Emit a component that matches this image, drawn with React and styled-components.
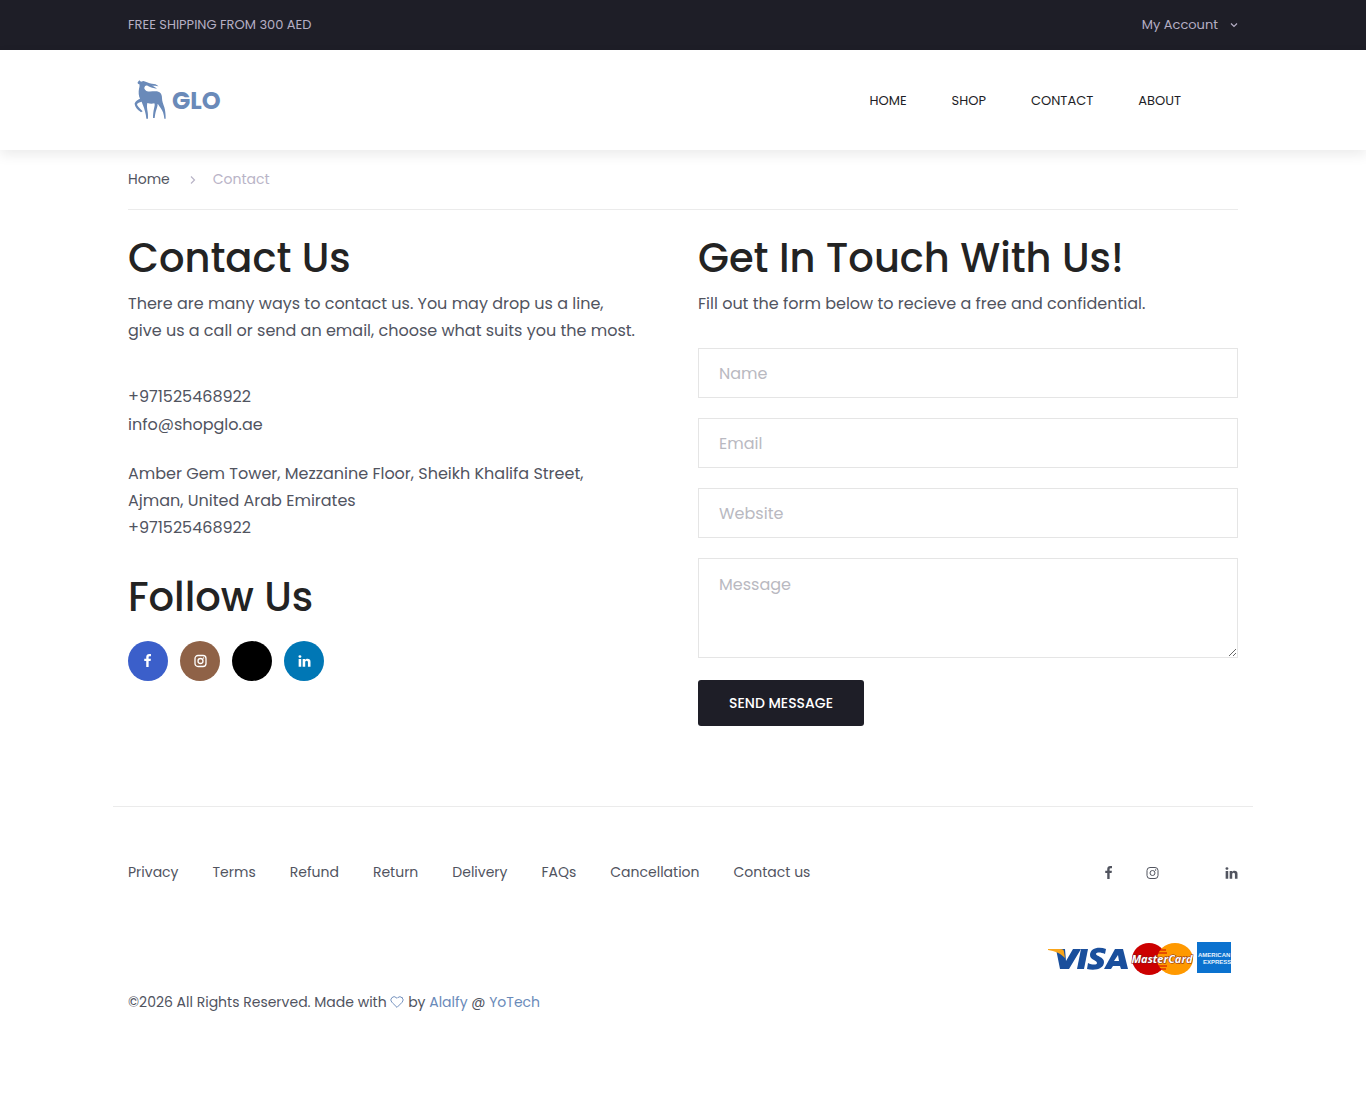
import styled, { createGlobalStyle, css } from 'styled-components'
import { FiHeart } from 'react-icons/fi'

const navLinks = ['HOME', 'SHOP', 'CONTACT', 'ABOUT']

const footerLinks = [
  'Privacy',
  'Terms',
  'Refund',
  'Return',
  'Delivery',
  'FAQs',
  'Cancellation',
  'Contact us',
]

const Facebook = () => (
  <svg width="8" height="14" viewBox="448 0 1024 1792" fill="currentColor">
    <path d="M1343 12v264h-157q-86 0-116 36t-30 108v189h293l-39 296h-254v759h-306v-759h-255v-296h255v-218q0-186 104-288.5t277-102.5q147 0 228 12z" />
  </svg>
)

const Instagram = () => (
  <svg width="13" height="14" viewBox="0 0 13 14" fill="none" stroke="currentColor">
    <rect x="1" y="1.500" width="11" height="11" rx="3" />
    <circle cx="6.5" cy="7" r="2.5" />
    <circle cx="9.6" cy="4" r="0.7" fill="currentColor" stroke="none" />
  </svg>
)

const Linkedin = () => (
  <svg width="13" height="14" viewBox="128 0 1536 1792" fill="currentColor">
    <path d="M477 625v991h-330v-991h330zm21-306q1 73-50.5 122t-135.5 49h-2q-82 0-132-49t-50-122q0-74 51.5-122.5t134.5-48.5 133 48.5 51 122.5zm1166 729v568h-329v-530q0-105-40.5-164.5t-126.5-59.5q-63 0-105.5 34.5t-63.5 85.5q-11 30-11 81v553h-329q2-399 2-647t-1-296l-1-48h329v144h-2q20-32 41-56t56.5-52 87-43.5 114.5-15.5q171 0 278 113.5t107 332.5z" />
  </svg>
)

const socials = [
  { name: 'Facebook', color: '#3b5fca', icon: <Facebook /> },
  { name: 'Instagram', color: '#8f6247', icon: <Instagram /> },
  { name: 'X', color: '#000', icon: null },
  { name: 'LinkedIn', color: '#0077b5', icon: <Linkedin /> },
]

const Chevron = ({ d }) => (
  <svg width="8" height="8" viewBox="0 0 8 8" fill="none" stroke="currentColor" strokeWidth="1.2">
    <path d={d} />
  </svg>
)

const Logo = () => (
  <svg width="40" height="48" viewBox="0 0 120 144" fill="#6a8ab9" aria-hidden="true">
    <path d="M23 19L28 13L33 17L40 15C50 17 56 23 66 23C74 23 80 25 86 31C78 29 72 29 66 29C72 31 76 33 81 38C70 37 62 34 54 30C50 28 47 28 45 31C41 36 43 41 49 45C57 48 66 46 76 46C90 46 96 54 96 66C96 77 100 84 103 94C106 104 107 116 107 128L103 128C102 114 98 104 92 96C88 90 85 86 83 83C83 92 79 100 77 108C75 114 75 120 74 126L69 126C69 116 70 106 72 98C74 90 75 86 73 82C66 84 58 83 52 81C50 88 51 98 53 108C54 114 54 120 54 128L49 128C48 114 43 98 39 88C37 82 36 80 35 77C28 79 23 81 21 84C21 89 28 96 38 106L33 109C24 102 14 94 14 82C17 75 24 71 30 68C26 59 25 48 27 38C29 32 29 28 28 25C26 25 24 24 23 22z" />
  </svg>
)

const Cards = () => (
  <svg width="186" height="36" viewBox="0 0 186 36" role="img" aria-label="Visa, MasterCard, American Express">
    <g fill="#1a4f9c">
      <path d="M9 8h9l1 12 7-12h8L22 28h-9z" />
      <path d="M34 8h7l-4 20h-7z" />
      <path d="M59 8l-1 5c-4-2-9-2-9 0 0 2 8 3 8 8 0 7-9 9-17 7l1-6c4 2 9 2 9 0 0-3-7-3-7-8 0-7 9-9 16-6z" />
      <path d="M68 8h8l5 20h-7l-1-3h-7l-2 3h-7zm3 6l-4 6h5z" fillRule="evenodd" />
    </g>
    <path d="M1 8h12c3 0 4 1 4 3l1 6C13 12 8 10 1 9z" fill="#f9a51a" />
    <ellipse cx="102" cy="18" rx="17" ry="16" fill="#cc0000" />
    <ellipse cx="128" cy="18" rx="18" ry="16" fill="#ff9900" />
    <path d="M112 9h7M111 12h9M110 25h10M112 28h7" stroke="#cc0000" strokeWidth="1" />
    <text
      x="115"
      y="22"
      textAnchor="middle"
      fontFamily="'Open Sans', sans-serif"
      fontSize="11"
      fontWeight="700"
      fontStyle="italic"
      fill="#fff"
      stroke="#7a1c1c"
      strokeWidth="1"
      paintOrder="stroke"
    >
      MasterCard
    </text>
    <rect x="150" y="1" width="34" height="31" fill="#0b72cf" />
    <g
      fontFamily="'Liberation Sans', sans-serif"
      fontSize="6"
      fontWeight="700"
      fill="#e6f2fd"
    >
      <text x="151" y="16">AMERICAN</text>
      <text x="156" y="23">EXPRESS</text>
    </g>
  </svg>
)

const App = () => {
  return (
    <>
      <GlobalStyle />
      <TopBar>
        <Container className="bar">
          <span>FREE SHIPPING FROM 300 AED</span>
          <AccountButton type="button">
            My Account <Chevron d="M1 2.5l3 3 3-3" />
          </AccountButton>
        </Container>
      </TopBar>

      <Header>
        <Container className="bar">
          <Brand href="#">
            <Logo />
            GLO
          </Brand>
          <Nav>
            {navLinks.map((link) => (
              <a href="#" key={link}>
                {link}
              </a>
            ))}
          </Nav>
        </Container>
      </Header>

      <Container>
        <Breadcrumb aria-label="Breadcrumb">
          <a href="#">Home</a>
          <Chevron d="M2 0.5l3.500 3.500-3.500 3.500" />
          <span>Contact</span>
        </Breadcrumb>

        <Columns>
          <section>
            <Title>Contact Us</Title>
            <Text>
              There are many ways to contact us. You may drop us a line,
              <br />
              give us a call or send an email, choose what suits you the most.
            </Text>
            <Details>
              <a href="tel:+971525468922">+971525468922</a>
              <a href="mailto:info@shopglo.ae">info@shopglo.ae</a>
            </Details>
            <Text>
              Amber Gem Tower, Mezzanine Floor, Sheikh Khalifa Street,
              <br />
              Ajman, United Arab Emirates
              <br />
              +971525468922
            </Text>
            <Title $spaced>Follow Us</Title>
            <SocialRow>
              {socials.map(({ name, color, icon }) => (
                <SocialCircle href="#" key={name} aria-label={name} $color={color}>
                  {icon}
                </SocialCircle>
              ))}
            </SocialRow>
          </section>

          <section>
            <Title>Get In Touch With Us!</Title>
            <Text>Fill out the form below to recieve a free and confidential.</Text>
            <Form onSubmit={(e) => e.preventDefault()}>
              <Input type="text" placeholder="Name" aria-label="Name" />
              <Input type="email" placeholder="Email" aria-label="Email" />
              <Input type="text" placeholder="Website" aria-label="Website" />
              <TextArea placeholder="Message" aria-label="Message" />
              <SendButton type="submit">SEND MESSAGE</SendButton>
            </Form>
          </section>
        </Columns>
      </Container>

      <Footer>
        <FooterRow>
          <FooterLinks>
            {footerLinks.map((link) => (
              <a href="#" key={link}>
                {link}
              </a>
            ))}
          </FooterLinks>
          <FooterSocials>
            {socials.map(({ name, icon }) => (
              <a href="#" key={name} aria-label={name}>
                {icon}
              </a>
            ))}
          </FooterSocials>
        </FooterRow>
        <Payments>
          <Cards />
        </Payments>
        <Copyright>
          ©2026 All Rights Reserved. Made with <FiHeart strokeWidth={1.6} /> by{' '}
          <a href="#">Alalfy</a> @ <a href="#">YoTech</a>
        </Copyright>
      </Footer>
    </>
  )
}
export default App

const GlobalStyle = createGlobalStyle`
  * {
    box-sizing: border-box;
  }

  body {
    margin: 0;
    background: #fff;
    color: #51545f;
    font-family: Poppins, Inter, sans-serif;
    font-size: 16px;
    line-height: 27px;
  }

  a {
    color: inherit;
    text-decoration: none;
  }

  button,
  input,
  textarea {
    font-family: inherit;
  }
`

const Container = styled.div`
  width: 100%;
  max-width: 1140px;
  margin: 0 auto;
  padding: 0 15px;

  &.bar {
    display: flex;
    align-items: center;
    justify-content: space-between;
    height: 100%;
  }
`

const TopBar = styled.div`
  height: 50px;
  background: #1e1e27;
  color: #b5aec4;
  font-size: 13px;
  line-height: 24px;
`

const AccountButton = styled.button`
  display: flex;
  align-items: center;
  gap: 12px;
  padding: 0;
  border: 0;
  background: none;
  color: inherit;
  font-size: 13px;
  line-height: 24px;
`

const Header = styled.header`
  height: 100px;
  background: #fff;
  box-shadow: 0 5px 12px rgba(0, 0, 0, 0.08);
`

const Brand = styled.a`
  display: flex;
  align-items: center;
  gap: 2px;
  padding-left: 2px;
  color: #6a8ab9;
  font-size: 24px;
  font-weight: 700;
`

const Nav = styled.nav`
  display: flex;
  gap: 45px;
  padding-right: 57px;
  color: #1e1e27;
  font-size: 13px;
`

const Breadcrumb = styled.nav`
  display: flex;
  align-items: center;
  height: 60px;
  border-bottom: 1px solid #ebebeb;
  font-size: 14px;

  svg {
    margin: 0 16px 0 19px;
  }

  svg,
  span {
    color: #b9b4c7;
  }
`

const Columns = styled.main`
  display: grid;
  grid-template-columns: 1fr 1fr;
  gap: 30px;
  padding-top: 24px;
`

const Title = styled.h1`
  margin: ${({ $spaced }) => ($spaced ? '32px 0 8px' : '0 0 8px')};
  color: #232323;
  font-size: 40px;
  font-weight: 500;
  line-height: 48px;
`

const Text = styled.p`
  margin: 0;
`

const Details = styled.div`
  display: flex;
  flex-direction: column;
  align-items: flex-start;
  gap: 1px;
  margin: 39px 0 22px;
`

const SocialRow = styled.div`
  display: flex;
  gap: 12px;
  padding-top: 12px;
`

const SocialCircle = styled.a`
  display: flex;
  align-items: center;
  justify-content: center;
  width: 40px;
  height: 40px;
  border-radius: 50%;
  background: ${({ $color }) => $color};
  color: #fff;

  svg {
    stroke-width: 1.3px;
  }
`

const Form = styled.form`
  display: flex;
  flex-direction: column;
  align-items: flex-start;
  gap: 20px;
  padding-top: 31px;
`

const field = css`
  width: 100%;
  border: 1px solid #e5e5e5;
  border-radius: 0;
  background: #fff;
  color: #51545f;
  font-size: 16px;
  line-height: 24px;

  &::placeholder {
    color: #b9b9c1;
    opacity: 1;
  }
`

const Input = styled.input`
  ${field}
  height: 50px;
  padding: 0 20px;
`

const TextArea = styled.textarea`
  ${field}
  display: block;
  height: 100px;
  padding: 14px 20px;
  resize: vertical;
`

const SendButton = styled.button`
  margin-top: 2px;
  padding: 0 31px;
  height: 46px;
  border: 0;
  border-radius: 3px;
  background: #1e1e27;
  color: #fff;
  font-size: 14px;
  font-weight: 500;
`

const Footer = styled.footer`
  max-width: 1140px;
  margin: 80px auto 0;
  padding: 52px 15px 100px;
  border-top: 1px solid #ebebeb;
  font-size: 14px;
`

const FooterRow = styled.div`
  display: flex;
  align-items: center;
  justify-content: space-between;
`

const FooterLinks = styled.nav`
  display: flex;
  gap: 34px;
`

const FooterSocials = styled.div`
  display: flex;
  gap: 33px;

  a {
    display: flex;
    align-items: center;
  }
`

const Payments = styled.div`
  display: flex;
  justify-content: flex-end;
  padding: 55px 5px 0 0;
`

const Copyright = styled.p`
  margin: 12px 0 0;

  svg {
    vertical-align: -2px;
  }

  a,
  svg {
    color: #6a8ab9;
  }
`
